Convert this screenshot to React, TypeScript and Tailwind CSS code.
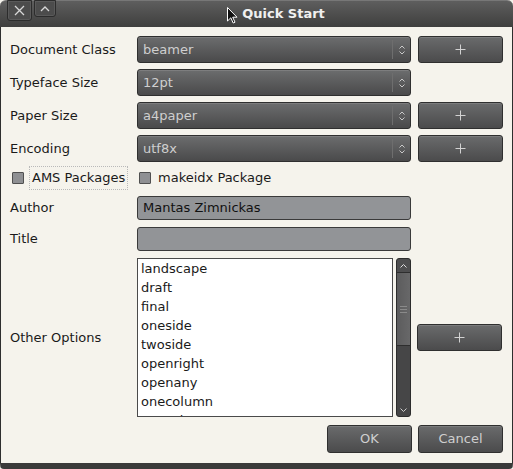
import React from "react";

const font = { fontFamily: '"DejaVu Sans", "Liberation Sans", sans-serif' };

function Arrows() {
  return (
    <svg width="8" height="12" viewBox="0 0 8 12" className="block">
      <path d="M1.5 4.5 L4 2 L6.5 4.5" fill="none" stroke="#c9c9c9" strokeWidth="1" />
      <path d="M1.5 7.5 L4 10 L6.5 7.5" fill="none" stroke="#c9c9c9" strokeWidth="1" />
    </svg>
  );
}

function Combo({ value }: { value: string }) {
  return (
    <div className="h-[27px] w-[274px] rounded-[3px] border border-[#2f2f2f] bg-gradient-to-b from-[#6c6d6e] to-[#4a4a4b] flex items-center text-[#cfcfcf] shadow-[inset_0_1px_0_rgba(255,255,255,0.12)]">
      <span className="flex-1 pl-[5px] pt-[1px]">{value}</span>
      <div className="w-px h-[19px] bg-[#3b3b3b] border-r border-[#6e6e6e]" />
      <div className="w-[17px] flex justify-center">
        <Arrows />
      </div>
    </div>
  );
}

function Btn({ label, w = 85 }: { label: string; w?: number }) {
  return (
    <div
      className="h-[28px] rounded-[3px] border border-[#2f2f2f] bg-gradient-to-b from-[#6a6b6c] to-[#4b4b4c] flex items-center justify-center text-[#cfcfcf] shadow-[inset_0_1px_0_rgba(255,255,255,0.12)]"
      style={{ width: w }}
    >
      {label}
    </div>
  );
}

function PlusBtn() {
  return (
    <div className="h-[27px] w-[85px] rounded-[3px] border border-[#2f2f2f] bg-gradient-to-b from-[#6a6b6c] to-[#4b4b4c] flex items-center justify-center shadow-[inset_0_1px_0_rgba(255,255,255,0.12)]">
      <svg width="11" height="11" viewBox="0 0 11 11">
        <path d="M5.5 0.5 V10.5 M0.5 5.5 H10.5" stroke="#d2d2d2" strokeWidth="1" />
      </svg>
    </div>
  );
}

function Entry({ value }: { value: string }) {
  return (
    <div className="h-[24px] w-[274px] rounded-[3px] border border-[#3a3a3a] bg-[#929497] flex items-center pl-[5px] text-[#111]">
      {value}
    </div>
  );
}

function Check() {
  return <div className="w-[12px] h-[12px] border border-[#505050] bg-[#8f9093] rounded-[1px]" />;
}

const items = [
  "landscape",
  "draft",
  "final",
  "oneside",
  "twoside",
  "openright",
  "openany",
  "onecolumn",
  "twocolumn",
];

export default function App() {
  return (
    <div className="w-[513px] h-[469px] relative bg-[#f5f3ec] text-[13px] text-[#1a1a1a] overflow-hidden" style={font}>
      {/* title bar */}
      <div className="h-[27px] rounded-t-[6px] bg-gradient-to-b from-[#5e5e5e] to-[#3f3f3e] relative flex items-center justify-center border-t border-[#777]">
        <span className="font-bold text-[#f0f0f0] text-[13px] ml-[54px]">Quick Start</span>
        <div className="absolute left-[7px] top-[-1px] w-[25px] h-[21px] rounded-b-[3px] border border-[#2c2c2c] bg-[#4c4c4c] flex items-center justify-center shadow-[inset_0_0_0_1px_rgba(255,255,255,0.08)]">
          <svg width="11" height="11" viewBox="0 0 11 11">
            <path d="M1 1 L10 10 M10 1 L1 10" stroke="#d8d8d8" strokeWidth="1.3" />
          </svg>
        </div>
        <div className="absolute left-[34px] top-[-1px] w-[22px] h-[17px] rounded-b-[3px] border border-[#2c2c2c] bg-[#4c4c4c] flex items-center justify-center shadow-[inset_0_0_0_1px_rgba(255,255,255,0.08)]">
          <svg width="10" height="6" viewBox="0 0 10 6">
            <path d="M1 5 L5 1 L9 5" fill="none" stroke="#d8d8d8" strokeWidth="1.3" />
          </svg>
        </div>
        <svg className="absolute left-[227px] top-[6px]" width="11" height="17" viewBox="0 0 11 17">
          <path d="M0.5 0.5 L0.5 14 L3.8 10.8 L6.2 16 L8 15.2 L5.7 10.2 L10 10.2 Z" fill="#111" stroke="#fff" strokeWidth="1" />
        </svg>
      </div>

      {/* body */}
      <div className="absolute left-0 right-0 top-[27px] bottom-0 border-l border-r border-[#2e2e2e] border-b-[6px] border-b-[#3a3a3a] rounded-b-[4px]">
        <div className="pl-[9px] pr-[8px] pt-[9px] flex flex-col">
          {[
            ["Document Class", "beamer", true],
            ["Typeface Size", "12pt", false],
            ["Paper Size", "a4paper", true],
            ["Encoding", "utf8x", true],
          ].map(([label, val, plus], i) => (
            <div key={i} className="flex items-center h-[27px] mb-[6px]">
              <span className="w-[127px] pt-[1px]">{label as string}</span>
              <Combo value={val as string} />
              <div className="ml-[7px]">{plus ? <PlusBtn /> : null}</div>
            </div>
          ))}
          <div className="flex items-center h-[20px] mt-[0px] mb-[8px]">
            <div className="flex items-center w-[127px]">
              <div className="ml-[2px]"><Check /></div>
              <span className="ml-[5px] px-[2px] py-[1px] border border-dotted border-[#b9b9b9] whitespace-nowrap">AMS Packages</span>
            </div>
            <div className="ml-[2px]"><Check /></div>
            <span className="ml-[7px]">makeidx Package</span>
          </div>
          <div className="flex items-center mb-[7px]">
            <span className="w-[127px]">Author</span>
            <Entry value="Mantas Zimnickas" />
          </div>
          <div className="flex items-center mb-[7px]">
            <span className="w-[127px]">Title</span>
            <Entry value="" />
          </div>
          <div className="flex items-center">
            <span className="w-[127px]">Other Options</span>
            <div className="w-[274px] h-[159px] flex">
              <div className="w-[257px] h-full bg-white border border-[#4a4a4a] overflow-hidden pl-[3px]">
                {items.map((t) => (
                  <div key={t} className="h-[19px] leading-[19px]">{t}</div>
                ))}
              </div>
              <div className="ml-[3px] w-[15px] h-full rounded-[3px] border border-[#2c2c2c] bg-[#464647] flex flex-col">
                <div className="h-[13px] flex items-center justify-center bg-[#4e4e4f] rounded-t-[3px]">
                  <svg width="7" height="4" viewBox="0 0 7 4"><path d="M0.5 3.5 L3.5 0.5 L6.5 3.5" fill="none" stroke="#ddd" strokeWidth="1" /></svg>
                </div>
                <div className="h-[74px] bg-gradient-to-r from-[#5c5c5d] to-[#686869] border-y border-[#2e2e2e] flex flex-col items-center justify-center gap-[2px]">
                  <div className="w-[7px] h-px bg-[#8a8a8a]" />
                  <div className="w-[7px] h-px bg-[#8a8a8a]" />
                  <div className="w-[7px] h-px bg-[#8a8a8a]" />
                </div>
                <div className="flex-1" />
                <div className="h-[13px] flex items-center justify-center">
                  <svg width="7" height="4" viewBox="0 0 7 4"><path d="M0.5 0.5 L3.5 3.5 L6.5 0.5" fill="none" stroke="#ccc" strokeWidth="1" /></svg>
                </div>
              </div>
            </div>
            <div className="ml-[6px]"><PlusBtn /></div>
          </div>
          <div className="flex justify-end gap-[6px] mt-[8px] pr-[1px]">
            <Btn label="OK" />
            <Btn label="Cancel" />
          </div>
        </div>
      </div>
    </div>
  );
}
